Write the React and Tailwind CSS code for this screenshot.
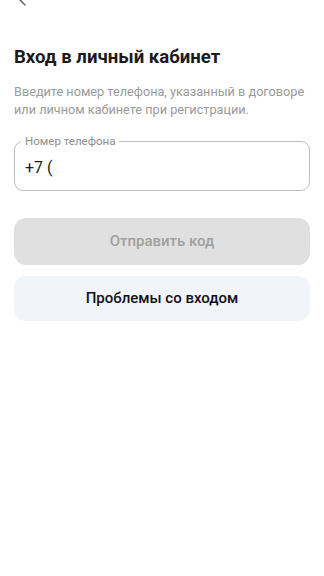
import React from 'react';

const App = () => {
  return (
    <div className="min-h-screen w-full bg-white" style={{ fontFamily: 'Roboto, "Noto Sans", sans-serif' }}>
      <div className="h-[55px] px-[10px]">
        <svg className="-mt-[14px]" width="22" height="22" viewBox="0 0 22 22" fill="none">
          <path d="M15 3 L7 11 L15 19" stroke="#6b6b6b" strokeWidth="1.6" strokeLinecap="round" strokeLinejoin="round" />
        </svg>
      </div>
      <div className="px-[14px] pt-[4px]">
        <h1 className="text-[18.6px] leading-[24px] font-bold text-[#1b1b1b]">Вход в личный кабинет</h1>
        <p className="mt-[14px] text-[12.7px] leading-[17.5px] text-[#9a9a9a]">
          Введите номер телефона, указанный в договоре или личном кабинете при регистрации.
        </p>

        <div className="relative mt-[23px] h-[50px] rounded-[9px] border border-[#bdbdbd] flex items-center px-[10px]">
          <span className="absolute -top-[8px] left-[6px] bg-white px-[4px] text-[11.5px] leading-[14px] text-[#8e8e8e]">Номер телефона</span>
          <span className="text-[16px] text-[#1b1b1b] mt-[4px]">+7 (</span>
        </div>

        <button className="mt-[27px] w-full h-[47px] rounded-[12px] bg-[#e0e0e0] text-[15px] font-medium text-[#a0a0a0]">
          Отправить код
        </button>
        <button className="mt-[11px] w-full h-[45px] rounded-[12px] bg-[#f1f4f9] text-[15px] font-medium text-[#111]">
          Проблемы со входом
        </button>
      </div>
    </div>
  );
};

export default App;
